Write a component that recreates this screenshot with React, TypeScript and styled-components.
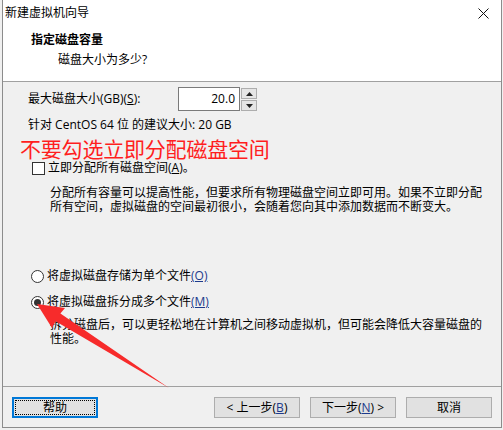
import React from "react";
import styled, { createGlobalStyle } from "styled-components";

const Global = createGlobalStyle`
  html, body { margin: 0; padding: 0; background: #f0f0f0; }
  body { font-family: "Open Sans", "Noto Sans CJK SC", sans-serif; font-size: 12px; color: #000; }
  * { box-sizing: border-box; }
`;

const Window = styled.div`
  position: relative;
  margin-left: 2px;
  width: 500px;
  height: 428px;
  border-left: 1px solid #8c8c8c;
  border-right: 1px solid #8c8c8c;
  border-bottom: 1px solid #8c8c8c;
  background: #f0f0f0;
  display: flex;
  flex-direction: column;
  overflow: hidden;
`;

const WhiteArea = styled.div`
  background: #fff;
  height: 82px;
  border-bottom: 1px solid #a0a0a0;
  display: flex;
  flex-direction: column;
`;

const TitleBar = styled.div`
  height: 26px;
  display: flex;
  align-items: center;
  justify-content: space-between;
  padding: 0 12px 0 2px;
  line-height: 16px;
`;

const Header = styled.div`
  padding: 6px 0 0 28px;
  display: flex;
  flex-direction: column;
  gap: 4px;
`;

const HeaderTitle = styled.div`
  font-weight: bold;
  line-height: 16px;
`;

const HeaderSub = styled.div`
  padding-left: 27px;
  line-height: 16px;
`;

const Content = styled.div`
  flex: 1;
  display: flex;
  flex-direction: column;
  padding: 5px 0 0 25px;
`;

const SizeRow = styled.div`
  display: flex;
  align-items: center;
  height: 24px;
`;

const Label = styled.div`
  width: 150px;
  line-height: 16px;
`;

const Spin = styled.div`
  display: flex;
  height: 24px;
`;

const SpinInput = styled.div`
  width: 62px;
  height: 24px;
  border: 1px solid #7a7a7a;
  background: #fff;
  text-align: right;
  padding-right: 4px;
  line-height: 21px;
`;

const SpinButtons = styled.div`
  display: flex;
  flex-direction: column;
  margin-left: 1px;
  gap: 1px;
  padding-top: 1px;
`;

const SpinBtn = styled.div`
  width: 16px;
  height: 11px;
  border: 1px solid #adadad;
  background: #e5e5e5;
  display: flex;
  align-items: center;
  justify-content: center;
`;

const Line = styled.div<{ $mt?: number }>`
  line-height: 16px;
  margin-top: ${(p) => p.$mt ?? 0}px;
`;

const RedNote = styled.div`
  color: #ff1e1e;
  font-family: "Noto Sans CJK SC", sans-serif;
  font-size: 21px;
  line-height: 22px;
  margin: 4px 0 0 -8px;
  letter-spacing: -0.2px;
`;

const OptionRow = styled.div<{ $mt: number }>`
  display: flex;
  align-items: center;
  gap: 3px;
  height: 16px;
  line-height: 16px;
  margin-top: ${(p) => p.$mt}px;
`;

const CheckBox = styled.div`
  width: 13px;
  height: 13px;
  border: 1px solid #333;
  background: #fff;
  margin-left: 4px;
`;

const Radio = styled.div<{ $checked?: boolean }>`
  width: 13px;
  height: 13px;
  border: 1px solid #333;
  border-radius: 50%;
  background: #fff;
  margin-left: 3px;
  display: flex;
  align-items: center;
  justify-content: center;
  &::after {
    content: "";
    width: 7px;
    height: 7px;
    border-radius: 50%;
    background: ${(p) => (p.$checked ? "#333" : "transparent")};
  }
`;

const Desc = styled.div<{ $mt: number }>`
  margin: ${(p) => p.$mt}px 0 0 22px;
  line-height: 14px;
  width: 440px;
`;

const Key = styled.span<{ $blue?: boolean }>`
  text-decoration: underline;
  color: ${(p) => (p.$blue ? "#1d3a8c" : "inherit")};
`;

const Footer = styled.div`
  border-top: 1px solid #a0a0a0;
  height: 41px;
  display: flex;
  align-items: flex-start;
  padding: 10px 9px 0 9px;
  gap: 10px;
`;

const Button = styled.div<{ $focus?: boolean }>`
  width: 86px;
  height: 21px;
  background: #e1e1e1;
  border: ${(p) => (p.$focus ? "2px solid #0078d7" : "1px solid #adadad")};
  display: flex;
  align-items: center;
  justify-content: center;
  line-height: 16px;
  position: relative;
  ${(p) =>
    p.$focus &&
    `&::before { content: ""; position: absolute; inset: 1px; border: 1px dotted #000; }`}
`;

const Spacer = styled.div`
  flex: 1;
`;

const ArrowSvg = styled.svg`
  position: absolute;
  left: -2px;
  top: 0;
  pointer-events: none;
`;

export default function App() {
  return (
    <>
      <Global />
      <Window>
        <WhiteArea>
          <TitleBar>
            <span>新建虚拟机向导</span>
            <svg width="11" height="11" viewBox="0 0 11 11">
              <path d="M0.5 0.5 L10.5 10.5 M10.5 0.5 L0.5 10.5" stroke="#111" strokeWidth="1" />
            </svg>
          </TitleBar>
          <Header>
            <HeaderTitle>指定磁盘容量</HeaderTitle>
            <HeaderSub>磁盘大小为多少?</HeaderSub>
          </Header>
        </WhiteArea>
        <Content>
          <SizeRow>
            <Label>
              最大磁盘大小(GB)(<Key>S</Key>):
            </Label>
            <Spin>
              <SpinInput>20.0</SpinInput>
              <SpinButtons>
                <SpinBtn>
                  <svg width="7" height="4" viewBox="0 0 7 4">
                    <path d="M3.5 0 L7 4 L0 4 Z" fill="#222" />
                  </svg>
                </SpinBtn>
                <SpinBtn>
                  <svg width="7" height="4" viewBox="0 0 7 4">
                    <path d="M0 0 L7 0 L3.5 4 Z" fill="#222" />
                  </svg>
                </SpinBtn>
              </SpinButtons>
            </Spin>
          </SizeRow>
          <Line $mt={6}>针对 CentOS 64 位 的建议大小: 20 GB</Line>
          <RedNote>不要勾选立即分配磁盘空间</RedNote>
          <OptionRow $mt={1}>
            <CheckBox />
            <span>
              立即分配所有磁盘空间(<Key>A</Key>)。
            </span>
          </OptionRow>
          <Desc $mt={10}>
            分配所有容量可以提高性能，但要求所有物理磁盘空间立即可用。如果不立即分配所有空间，虚拟磁盘的空间最初很小，会随着您向其中添加数据而不断变大。
          </Desc>
          <OptionRow $mt={54}>
            <Radio />
            <span>
              将虚拟磁盘存储为单个文件<Key $blue>(O)</Key>
            </span>
          </OptionRow>
          <OptionRow $mt={10}>
            <Radio $checked />
            <span>
              将虚拟磁盘拆分成多个文件<Key $blue>(M)</Key>
            </span>
          </OptionRow>
          <Desc $mt={8}>
            拆分磁盘后，可以更轻松地在计算机之间移动虚拟机，但可能会降低大容量磁盘的性能。
          </Desc>
        </Content>
        <Footer>
          <Button $focus>帮助</Button>
          <Spacer />
          <Button>
            &lt; 上一步(<Key $blue>B</Key>)
          </Button>
          <Button>
            下一步(<Key $blue>N</Key>) &gt;
          </Button>
          <Button>取消</Button>
        </Footer>
        <ArrowSvg width="503" height="430" viewBox="0 0 503 430">
          <polygon
            points="36,304 64,308 59.4,313.6 168,388 54.6,321.2 51,328"
            fill="#f72b2b"
          />
        </ArrowSvg>
      </Window>
    </>
  );
}
